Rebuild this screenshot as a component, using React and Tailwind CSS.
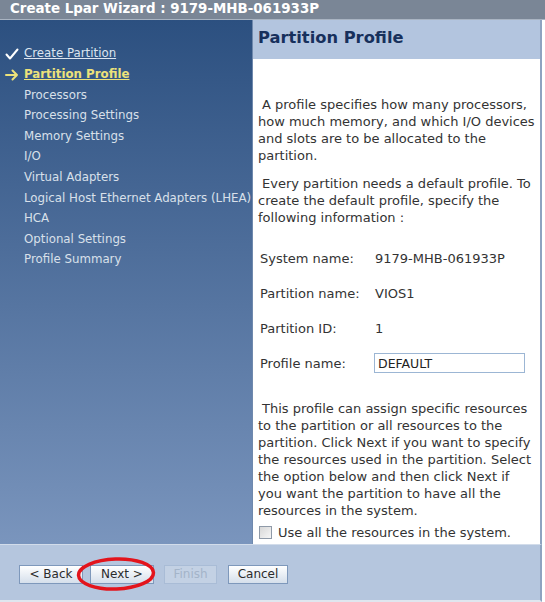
import { useState } from 'react';

const steps = [
  { label: 'Create Partition', state: 'done' },
  { label: 'Partition Profile', state: 'current' },
  { label: 'Processors' },
  { label: 'Processing Settings' },
  { label: 'Memory Settings' },
  { label: 'I/O' },
  { label: 'Virtual Adapters' },
  { label: 'Logical Host Ethernet Adapters (LHEA)' },
  { label: 'HCA' },
  { label: 'Optional Settings' },
  { label: 'Profile Summary' },
];

function StepMarker({ state }) {
  if (state === 'done') {
    return (
      <svg width="14" height="12" viewBox="0 0 14 12" className="shrink-0">
        <path d="M1.5 6.5 L5 10.5 L12.5 1.5" fill="none" stroke="#ffffff" strokeWidth="2" strokeLinecap="round" strokeLinejoin="round" />
      </svg>
    );
  }
  if (state === 'current') {
    return (
      <svg width="14" height="12" viewBox="0 0 14 12" className="shrink-0">
        <path d="M1 6 H12 M7.5 1.5 L12 6 L7.5 10.5" fill="none" stroke="#ece27a" strokeWidth="2" strokeLinecap="round" strokeLinejoin="round" />
      </svg>
    );
  }
  return <span className="w-[14px] shrink-0" />;
}

function WizardButton({ children, disabled, className = '' }) {
  return (
    <button
      disabled={disabled}
      className={
        (disabled
          ? 'h-[19px] border border-[#a9bcd6] bg-[#c3d1e4] text-[12px] leading-none text-[#a4b4c9] '
          : 'h-[19px] border border-[#7e98bb] bg-gradient-to-b from-[#ffffff] to-[#d5dfeb] text-[12px] leading-none text-[#2b2b2b] ') +
        className
      }
    >
      {children}
    </button>
  );
}

export default function App() {
  const [profileName, setProfileName] = useState('DEFAULT');
  const [useAll, setUseAll] = useState(false);

  return (
    <div className="relative flex h-[602px] w-[545px] flex-col bg-white font-['DejaVu_Sans',Verdana,sans-serif]">
      <div className="flex h-[20px] items-center border-b border-[#a9b4c2] bg-[#7a8696] pl-[10px] text-[13.4px] font-bold text-white">
        Create Lpar Wizard : 9179-MHB-061933P
      </div>

      <div className="mr-[3px] flex min-h-0 flex-1 border-r-2 border-[#8ea3c0]">
        <nav className="flex w-[252px] flex-col bg-gradient-to-b from-[#2c5080] to-[#7a95bd] pt-[24px] pl-[5px] text-[11.8px]">
          {steps.map((step) => (
            <div key={step.label} className="flex h-[20.6px] items-center gap-[5px] whitespace-nowrap">
              <StepMarker state={step.state} />
              <span
                className={
                  step.state === 'current'
                    ? 'font-bold text-[#ece27a] underline'
                    : step.state === 'done'
                      ? 'text-[#dce4ef] underline'
                      : 'text-[#d9e0ea]'
                }
              >
                {step.label}
              </span>
            </div>
          ))}
        </nav>

        <section className="flex flex-1 flex-col border-l border-[#6f89ad] bg-white">
          <div className="flex h-[39px] items-center bg-[#b3c5df] pb-[3px] pl-[5px] text-[16.3px] font-bold text-[#17305c]">
            Partition Profile
          </div>

          <div className="flex flex-col px-[5px] text-[13px] leading-[17px] text-[#333333]">
            <p className="mt-[37px] indent-[4px]">
              A profile specifies how many processors,<br />
              how much memory, and which I/O devices<br />
              and slots are to be allocated to the<br />
              partition.
            </p>
            <p className="mt-[11px] indent-[4px]">
              Every partition needs a default profile. To<br />
              create the default profile, specify the<br />
              following information :
            </p>

            <div className="mt-[24px] flex flex-col pl-[2px]">
              <div className="flex h-[17px] items-center">
                <span className="w-[115px]">System name:</span>
                <span>9179-MHB-061933P</span>
              </div>
              <div className="mt-[18px] flex h-[17px] items-center">
                <span className="w-[115px]">Partition name:</span>
                <span>VIOS1</span>
              </div>
              <div className="mt-[18px] flex h-[17px] items-center">
                <span className="w-[115px]">Partition ID:</span>
                <span>1</span>
              </div>
              <div className="mt-[16px] flex h-[20px] items-center">
                <span className="w-[114px]">Profile name:</span>
                <input
                  value={profileName}
                  onChange={(e) => setProfileName(e.target.value)}
                  className="h-[20px] w-[151px] border border-[#9cb6d4] px-[3px] text-[12.5px] text-[#222222] outline-none"
                />
              </div>
            </div>

            <p className="mt-[27px] indent-[4px]">
              This profile can assign specific resources<br />
              to the partition or all resources to the<br />
              partition. Click Next if you want to specify<br />
              the resources used in the partition. Select<br />
              the option below and then click Next if<br />
              you want the partition to have all the<br />
              resources in the system.
            </p>

            <label className="mt-[5px] flex h-[17px] items-center gap-[6px] pl-[1px]">
              <input
                type="checkbox"
                checked={useAll}
                onChange={(e) => setUseAll(e.target.checked)}
                className="h-[13px] w-[13px] appearance-none border border-[#8f9aa8] bg-gradient-to-br from-[#d8d8d8] to-[#f6f6f6]"
              />
              Use all the resources in the system.
            </label>
          </div>
        </section>
      </div>

      <footer className="mr-[3px] flex h-[58px] items-center border-t border-r-2 border-b-2 border-t-[#d2dcea] border-r-[#8ea3c0] border-b-[#dfe6ef] bg-[#b5c6de] pl-[19px] pt-[3px]">
        <WizardButton className="w-[64px]">&lt; Back</WizardButton>
        <WizardButton className="ml-[7px] w-[64px]">Next &gt;</WizardButton>
        <WizardButton disabled className="ml-[10px] w-[53px]">Finish</WizardButton>
        <WizardButton className="ml-[11px] w-[60px]">Cancel</WizardButton>
      </footer>

      <svg
        className="pointer-events-none absolute left-[76px] top-[556px]"
        width="80"
        height="36"
        viewBox="0 0 80 36"
      >
        <ellipse cx="40" cy="18" rx="37.5" ry="15" fill="none" stroke="#e3141c" strokeWidth="3.5" transform="rotate(-2 40 18)" />
      </svg>
    </div>
  );
}
